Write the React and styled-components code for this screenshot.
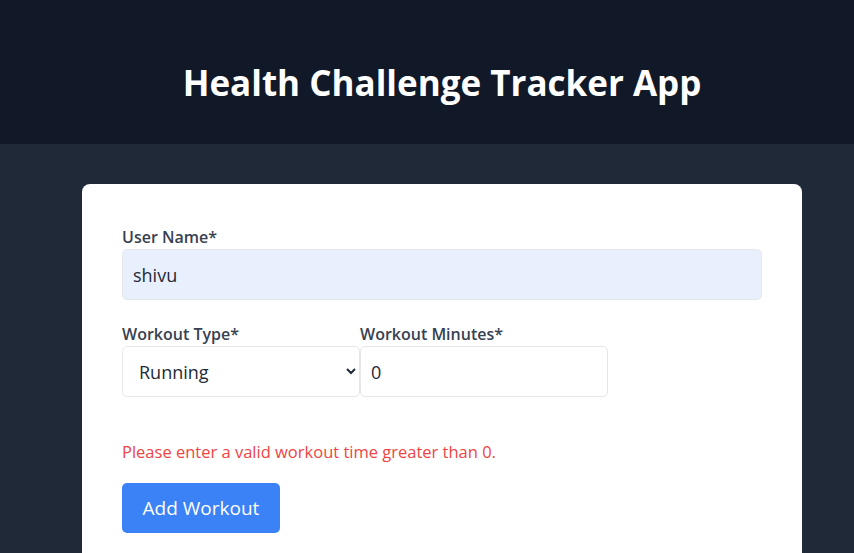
import styled, { createGlobalStyle } from 'styled-components';

const GlobalStyle = createGlobalStyle`
  * {
    box-sizing: border-box;
  }
  body {
    margin: 0;
    overflow: hidden;
    background: #1f2937;
    font-family: "Open Sans", "Noto Sans", sans-serif;
  }
`;

const Page = styled.div`
  width: 884px;
  min-height: 100vh;
  background: #1f2937;
`;

const Header = styled.header`
  height: 144px;
  padding-top: 22px;
  background: #111827;
  display: flex;
  align-items: center;
  justify-content: center;
`;

const Title = styled.h1`
  margin: 0;
  color: #ffffff;
  font-size: 35px;
  font-weight: 700;
  line-height: 40px;
`;

const Main = styled.main`
  padding: 40px 0;
  display: flex;
  justify-content: center;
`;

const Card = styled.div`
  width: 720px;
  background: #ffffff;
  border-radius: 8px;
  padding: 41px 40px 40px;
`;

const Field = styled.div`
  display: flex;
  flex-direction: column;
`;

const Label = styled.label`
  font-size: 16px;
  line-height: 24px;
  font-weight: 600;
  color: #374151;
`;

const TextInput = styled.input`
  width: ${(p) => p.$width || '100%'};
  height: 51px;
  padding: 0 10px;
  font-family: inherit;
  font-size: 18px;
  color: #1f2937;
  background: ${(p) => (p.$filled ? '#e8f0fe' : '#ffffff')};
  border: 1px solid #e5e7eb;
  border-radius: 5px;
  outline: none;
`;

const Select = styled.select`
  width: 238px;
  height: 51px;
  padding: 0 10px 0 12px;
  font-family: inherit;
  font-size: 18px;
  color: #1f2937;
  background: #ffffff;
  border: 1px solid #e5e7eb;
  border-radius: 5px;
  outline: none;
`;

const Row = styled.div`
  display: flex;
  margin-top: 22px;
`;

const ErrorText = styled.p`
  margin: 43px 0 0;
  font-size: 16.5px;
  line-height: 24px;
  color: #ef4444;
`;

const Button = styled.button`
  margin-top: 19px;
  width: 158px;
  height: 50px;
  font-family: inherit;
  font-size: 19px;
  color: #ffffff;
  background: #3b82f6;
  border: none;
  border-radius: 5px;
  cursor: pointer;
`;

export default function App() {
  return (
    <Page>
      <GlobalStyle />
      <Header>
        <Title>Health Challenge Tracker App</Title>
      </Header>
      <Main>
        <Card>
          <Field>
            <Label htmlFor="name">User Name*</Label>
            <TextInput id="name" $filled defaultValue="shivu" />
          </Field>
          <Row>
            <Field>
              <Label htmlFor="type">Workout Type*</Label>
              <Select id="type" defaultValue="Running">
                <option>Running</option>
                <option>Cycling</option>
                <option>Swimming</option>
                <option>Yoga</option>
              </Select>
            </Field>
            <Field>
              <Label htmlFor="minutes">Workout Minutes*</Label>
              <TextInput id="minutes" type="number" $width="248px" defaultValue="0" />
            </Field>
          </Row>
          <ErrorText>Please enter a valid workout time greater than 0.</ErrorText>
          <Button>Add Workout</Button>
        </Card>
      </Main>
    </Page>
  );
}
